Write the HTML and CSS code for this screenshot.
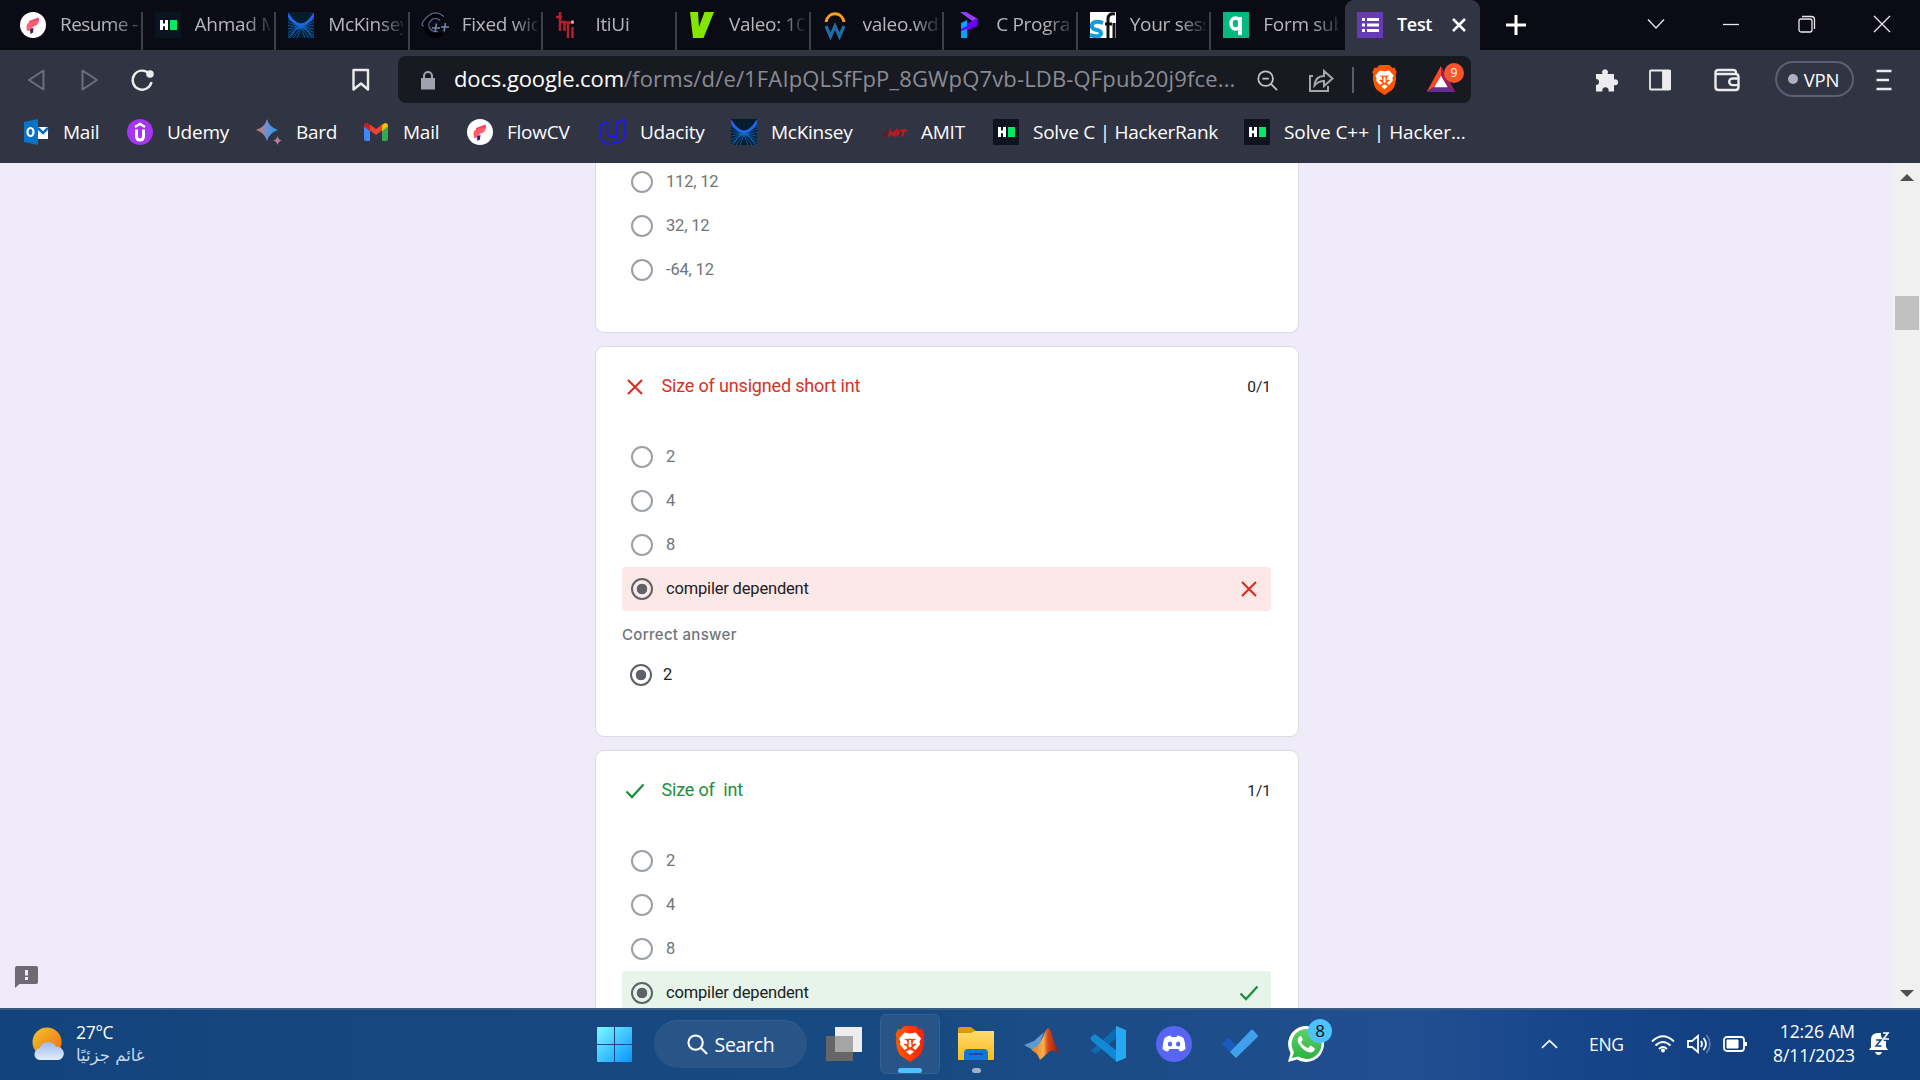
FILE: index.html
```
<!DOCTYPE html>
<html lang="en">
<head>
<meta charset="utf-8">
<title>Test</title>
<link rel="stylesheet" href="styles.css">
</head>
<body>
<svg class="defs" width="0" height="0">
  <defs>
    <linearGradient id="gWin" x1="0" y1="0" x2="1" y2="1"><stop offset="0" stop-color="#7df8ff"/><stop offset="1" stop-color="#0695ff"/></linearGradient>
    <linearGradient id="gFolder" x1="0" y1="0" x2="0" y2="1"><stop offset="0" stop-color="#ffdc6e"/><stop offset="1" stop-color="#fbb91d"/></linearGradient>
    <linearGradient id="gSun" x1="0" y1="0" x2="1" y2="1"><stop offset="0" stop-color="#f3c62b"/><stop offset="1" stop-color="#ee6a12"/></linearGradient>
    <linearGradient id="gCloud" x1="0" y1="0" x2="0" y2="1"><stop offset="0" stop-color="#9dbcf3"/><stop offset="1" stop-color="#e3ecfb"/></linearGradient>
    <linearGradient id="gBrave" x1="0" y1="0" x2="1" y2="0"><stop offset="0" stop-color="#ff5a00"/><stop offset="1" stop-color="#ff1f0a"/></linearGradient>
    <linearGradient id="gBard" x1="0" y1="0" x2="1" y2="0"><stop offset="0" stop-color="#e2705f"/><stop offset=".5" stop-color="#6c8fd8"/><stop offset="1" stop-color="#1b9be0"/></linearGradient>
    <linearGradient id="gMat" x1="0" y1="0" x2="1" y2="0"><stop offset="0" stop-color="#e87b1e"/><stop offset=".45" stop-color="#f7b04a"/><stop offset=".6" stop-color="#d9481c"/><stop offset="1" stop-color="#8e1a10"/></linearGradient>
    <linearGradient id="gWa" x1="0" y1="0" x2="0" y2="1"><stop offset="0" stop-color="#5fd06b"/><stop offset="1" stop-color="#2ab43f"/></linearGradient>
  </defs>
  <symbol id="flow" viewBox="0 0 26 26"><circle cx="13" cy="13" r="13" fill="#fff"/><path d="M9 9 18.500 5.500Q20 9 17 11L9 13.500z" fill="#ff3e6e"/><path d="M6.500 14Q7 11 9 10.500L18.500 8Q19 12 16 13.500L12.500 15v3L7 19z" fill="#ff5e6c"/><path d="M10 17.500 13.500 16 13 20.500 10.500 22z" fill="#3d1a78"/></symbol>
  <symbol id="hr" viewBox="0 0 26 26"><path d="M5 8h3v3.500h2V8h3v10h-3v-3.700H8V18H5z" fill="#fff"/><path d="M15 8h7v10h-7z" fill="#00ea64"/></symbol>
  <symbol id="mck" viewBox="0 0 26 26"><path fill="#051c2c" d="M0 0h26v26H0z"/><g fill="none"><path d="M0 1.500Q13 23 26 1.500M0 4Q13 23 26 4" stroke="#2563f5" stroke-width="1.500"/><path d="M0 7 17 17 26 26M26 7 9 17 0 26M0 10 18 17.500 24 26M26 10 8 17.500 2 26M0 13.500 12 15M26 13.500 14 15M0 17l11-2M26 17l-11-2M0 20.500 13 14 26 20.500M0 23.500 13 14 26 23.500M5 26 13 15 21 26M9 26l4-10 4 10" stroke="#116fd0" stroke-width=".7"/></g></symbol>
  <symbol id="lion" viewBox="0 0 30 36"><path d="M9 0h12l3.500 3.500L27 3l2.500 5.500L28.500 12 29 16c-1 7-2 11-5 14l-9 6-9-6C3 27 2 23 1 16l.5-4L.5 8.500 3 3l2.500.5z"/><path fill="#fff" d="M9.500 6.500 15 7.500l5.500-1L26 12.500l-1.500 3 .5 3-4.500 5.500-3-2L19 20l2.500-1.500-1.500-1-2.500.7.700-3.700 3.300-1.800-4.500.3L15 12.500l-2 .5-4.500-.3 3.300 1.800.7 3.700-2.500-.7-1.500 1L11 20l1.500 2-3 2L5 18.500l.5-3L4 12.500zM14 14h2l.5 6.500L15 21.500l-1.500-1zM15 23.500l4 2-4 3.500-4-3.500z"/></symbol>
  <symbol id="cross" viewBox="0 0 18 18"><path d="M2 2 16 16M16 2 2 16" fill="none" stroke="currentColor" stroke-width="2.200"/></symbol>
  <symbol id="tick" viewBox="0 0 20 18"><path d="M1.500 9.500 7 15 18.500 2.500" fill="none" stroke="currentColor" stroke-width="2.300"/></symbol>
</svg>

<header class="browser">
  <div class="tabs">
    <div class="tab lead"><svg class="fav"><use href="#flow"/></svg><span class="label">Resume -</span></div>
    <div class="tab"><svg class="fav hr-dim"><use href="#hr"/></svg><span class="label">Ahmad M</span></div>
    <div class="tab"><svg class="fav"><use href="#mck"/></svg><span class="label">McKinsey</span></div>
    <div class="tab"><svg class="fav" viewBox="0 0 26 26" fill="none"><path d="M21 5.500A10.500 10.500 0 1 0 20 21.500" stroke="#020206" stroke-width="4.500"/><path d="M22 4.500Q13-3 5 5T2 14" stroke="#57688f" stroke-width="1.200"/><path d="M18 8.500A6.500 6.500 0 1 0 16 19" stroke="#57688f" stroke-width="1.200"/><path d="M10 16h8M14.500 11.500 13 20M19 15h8M23.500 11 22 19.500" stroke="#7587b3" stroke-width="1.500"/></svg><span class="label">Fixed wid</span></div>
    <div class="tab"><svg class="fav" viewBox="0 0 26 26" fill="none" stroke="#b51f28" stroke-width="2.500"><path d="M5 0v19M1 5h6M5 10h4.500v9M9.500 10.500h9.500M13 11v15M17.500 15v11"/><path d="M17.500 8.500v3" stroke="#d7b7b9"/></svg><span class="label">ItiUi</span></div>
    <div class="tab"><svg class="fav" viewBox="0 0 26 26"><path d="M1 0h8l1 15L15.500 0H25L14.500 26H4z" fill="#82e600"/></svg><span class="label">Valeo: 10</span></div>
    <div class="tab"><svg class="fav" viewBox="0 0 26 26" fill="none"><path d="M3 10C5-1 19-1 21 10" stroke="#f5a11d" stroke-width="3"/><path d="M3 14 7.500 24.500 12 14 16.500 24.500 21 14" stroke="#1f6da8" stroke-width="3.200"/></svg><span class="label">valeo.wd</span></div>
    <div class="tab"><svg class="fav" viewBox="0 0 26 26"><path d="M4 0h6l12 7-3 4z" fill="#9a3dff"/><path d="M21.500 6v8L5 21v-6z" fill="#6a00f4"/><path d="M5 11l6-3v6l-6 3zM5 19l6-2v9H5z" fill="#00a3ff"/></svg><span class="label">C Progra</span></div>
    <div class="tab"><svg class="fav" viewBox="0 0 26 26"><path d="M0 0h26v26H0z" fill="#fff"/><path d="M13 11C5 8 1 11 2 15s9 2 9 6-5 4-11 2" fill="none" stroke="#159bd7" stroke-width="4"/><path d="M18 26V7q0-6 7-5M15 12h7M24 11v15" fill="none" stroke="#111" stroke-width="3"/></svg><span class="label">Your sess</span></div>
    <div class="tab no-sep"><svg class="fav" viewBox="0 0 26 26"><path d="M0 0h26v26H0z" fill="#04b980"/><ellipse cx="12.500" cy="11.500" rx="4.500" ry="5.500" fill="none" stroke="#fff" stroke-width="3.500"/><path d="M17 5v18" stroke="#fff" stroke-width="3.700"/></svg><span class="label">Form sub</span></div>
    <div class="tab active"><svg class="fav" viewBox="0 0 26 26"><path d="M0 0h26v26H0z" fill="#673ab7"/><path d="M5 6h3v3H5zM5 11.500h3v3H5zM5 17h3v3H5zM10 6h12v3H10zM10 11.500h12v3H10zM10 17h12v3H10z" fill="#fff"/></svg><span class="label">Test</span><svg class="tab-close" viewBox="0 0 14 14"><path d="M1 1 13 13M13 1 1 13"/></svg></div>
    <svg class="new-tab" viewBox="0 0 20 20"><path d="M10 0v20M0 10h20"/></svg>
    <div class="winctl">
      <svg width="18" height="18" viewBox="0 0 18 18"><path d="M1 4.500 9 13 17 4.500"/></svg>
      <svg width="18" height="18" viewBox="0 0 18 18"><path d="M1 9.500h16"/></svg>
      <svg width="18" height="18" viewBox="0 0 18 18"><rect x="1" y="4" width="13" height="13" rx="2"/><path d="M4 1.500h9.500a3 3 0 0 1 3 3V14"/></svg>
      <svg width="18" height="18" viewBox="0 0 18 18"><path d="M1 1 17 17M17 1 1 17"/></svg>
    </div>
  </div>

  <div class="toolbar">
    <svg class="ic dim" viewBox="0 0 24 24"><path d="M18.500 2.500v19L4 12z"/></svg>
    <svg class="ic dim forward" viewBox="0 0 24 24"><path d="M5.500 2.500v19L20 12z"/></svg>
    <svg class="ic reload" viewBox="0 0 24 24"><path d="M19 5.500A9.500 9.500 0 1 0 21.500 14"/><circle cx="20" cy="6" r="2.600" fill="#ececee"/></svg>
    <svg class="ic bookmark" viewBox="0 0 24 24"><path d="M4.500 2h14.500v19.500L12 15.500 4.500 21.500z"/></svg>
    <div class="address">
      <svg class="lock" viewBox="0 0 20 20"><path d="M3 8h14v11.500H3z" fill="#a0a3ad"/><path d="M6 8.500V6a4 4 0 0 1 8 0v2.500" fill="none" stroke="#a0a3ad" stroke-width="2"/></svg>
      <div class="url"><b>docs.google.com</b>/forms/d/e/1FAIpQLSfFpP_8GWpQ7vb-LDB-QFpub20j9fce...</div>
      <svg class="zoom" viewBox="0 0 24 24"><circle cx="10.500" cy="10.500" r="8"/><path d="M16.500 16.500 23 23M7 10.500h7"/></svg>
      <svg class="share" viewBox="0 0 26 26"><path d="M5 9H2v15h18v-5M6.500 18.500c.5-6 4-9.500 9.500-9.500V4l8.500 7.500L16 19v-5c-4.500 0-7 1.500-9.500 4.500z"/></svg>
      <i class="bar"></i>
      <svg class="shield" fill="#ff5500"><use href="#lion"/></svg>
      <div class="bat"><svg viewBox="0 0 30 27"><path d="M15 0 0 27 15 17z" fill="#ff4724"/><path d="M15 0 30 27 15 17z" fill="#9e1f63"/><path d="M0 27h30L15 17z" fill="#662d91"/><path d="M15 10 8 22h14z" fill="#fff"/></svg><span class="badge">9</span></div>
    </div>
    <svg class="puzzle" viewBox="0 0 24 24"><path d="M1 6h6.500a3 3 0 1 1 5 0H19v5.500a3 3 0 1 1 0 5.500v6.500h-5.500a3.200 3.200 0 1 0-6 0H1V17a3 3 0 1 0 0-6z"/></svg>
    <svg class="ic sidebar" viewBox="0 0 24 24"><rect x="2" y="2.500" width="20" height="19" rx="1"/><path d="M15 3h7v18h-7z" fill="#ececee"/></svg>
    <svg class="ic wallet" viewBox="0 0 26 24"><path d="M22 6V5q0-3-3-3H4.500q-3 0-3 3v14q0 3 3 3h17q3 0 3-3V9q0-3-3-3H2M25 10.500h-6.500a3.300 3.300 0 0 0 0 6.600H25"/></svg>
    <div class="vpn"><i></i>VPN</div>
    <svg class="ic menu" viewBox="0 0 24 24"><path d="M4.500 3h15M4.500 12h12.500M4.500 21h15"/></svg>
  </div>

  <nav class="bookmarks">
    <a><svg class="fav" viewBox="0 0 26 26"><path d="M14 8h11v12H14z" fill="#fff"/><path d="M15 9l5 5 5-5" stroke="#0a6ebd" stroke-width="2.500" fill="none"/><path d="M1 3l14-3v26L1 23z" fill="#0a72c7"/><ellipse cx="7.500" cy="13" rx="3" ry="4" fill="none" stroke="#fff" stroke-width="2.200"/></svg>Mail</a>
    <a><svg class="fav" viewBox="0 0 26 26"><circle cx="13" cy="13" r="13" fill="#a435f0"/><path d="M8 8l5-3 5 3" stroke="#fff" stroke-width="2.500" fill="none"/><path d="M9.500 10.500V17q0 4 3.500 4t3.500-4v-6.500" stroke="#fff" stroke-width="3" fill="none"/></svg>Udemy</a>
    <a><svg class="fav" viewBox="0 0 26 26"><path d="M11 0Q13 8 22 11 13 14 11 22 9 14 0 11 9 8 11 0z" fill="url(#gBard)"/><path d="M21.500 17q1 4 4.500 4.500-3.500.5-4.500 4.500-1-4-4.500-4.500 3.500-.5 4.500-4.500z" fill="#b57aa8"/></svg>Bard</a>
    <a><svg class="fav" viewBox="0 0 26 26"><path d="M1 7v13q0 2 2 2h4V10z" fill="#4285f4"/><path d="M19 10v12h4q2 0 2-2V7z" fill="#34a853"/><path d="M19 6v6l6-4.500V6q-2-4-6 0z" fill="#fbbc04"/><path d="M7 6v6L1 7.500V6q2-4 6 0z" fill="#c5221f"/><path d="M7 5.500 13 10l6-4.500v6L13 16l-6-4.500z" fill="#ea4335"/></svg>Mail</a>
    <a><svg class="fav"><use href="#flow"/></svg>FlowCV</a>
    <a><svg class="fav" viewBox="0 0 26 26"><path d="M7.500 2.500 1 5.500V17q0 8 7.500 8t8-7V3.500L25 1v14q-1 8-9.500 9.500M7.500 2.500V14q1 5 8 3" fill="none" stroke="#2015ff" stroke-width="1.700"/></svg>Udacity</a>
    <a><svg class="fav"><use href="#mck"/></svg>McKinsey</a>
    <a><svg class="fav amit" viewBox="0 0 26 26"><path d="M1 18l5-6v6M3 16h4" stroke="#582023"/><path d="M8 17.500 9.500 12l2 4 3.500-4-1 5.500M17.500 11l-1 6.500M19 11.500h7M22.500 12l-1 5.500" stroke="#c7161d"/></svg>AMIT</a>
    <a><svg class="fav hr-box"><use href="#hr"/></svg>Solve C | HackerRank</a>
    <a><svg class="fav hr-box"><use href="#hr"/></svg><span class="wide">Solve C++ | Hacker...</span></a>
  </nav>
</header>

<main class="viewport">
  <div class="feed">
    <section class="card first">
      <div class="opt"><i class="radio"></i><span>112, 12</span></div>
      <div class="opt"><i class="radio"></i><span>32, 12</span></div>
      <div class="opt"><i class="radio"></i><span>-64, 12</span></div>
    </section>
    <section class="card">
      <div class="title bad"><svg class="mark"><use href="#cross"/></svg><h2>Size of unsigned short int</h2><span class="score">0/1</span></div>
      <div class="opt"><i class="radio"></i><span>2</span></div>
      <div class="opt"><i class="radio"></i><span>4</span></div>
      <div class="opt"><i class="radio"></i><span>8</span></div>
      <div class="opt picked wrong"><i class="radio on"></i><span>compiler dependent</span><svg class="mark"><use href="#cross"/></svg></div>
      <div class="correct">Correct answer</div>
      <div class="opt picked answer"><i class="radio on"></i><span>2</span></div>
    </section>
    <section class="card">
      <div class="title good"><svg class="mark"><use href="#tick"/></svg><h2>Size of&nbsp; int</h2><span class="score">1/1</span></div>
      <div class="opt"><i class="radio"></i><span>2</span></div>
      <div class="opt"><i class="radio"></i><span>4</span></div>
      <div class="opt"><i class="radio"></i><span>8</span></div>
      <div class="opt picked right"><i class="radio on"></i><span>compiler dependent</span><svg class="mark"><use href="#tick"/></svg></div>
    </section>
  </div>
  <div class="scrollbar"><i class="up"></i><i class="thumb"></i><i class="down"></i></div>
  <svg class="report" viewBox="0 0 23 22"><path d="M2 0h19q2 0 2 2v14q0 2-2 2H4.500L0 22V2q0-2 2-2z" fill="#6e6973"/><path d="M10 4h3v5.500h-3zM10 11h3v3h-3z" fill="#efebf8"/></svg>
</main>

<footer class="taskbar">
  <svg class="weather" viewBox="0 0 34 34"><circle cx="15.500" cy="15" r="15" fill="url(#gSun)"/><path d="M9 33.500a6 6 0 0 1-1-12 9 8 0 0 1 17-1.500 6.500 6.500 0 0 1 2 13.500z" fill="url(#gCloud)"/></svg>
  <div class="temp"><span>27°C</span><span class="sky" lang="ar" dir="rtl">غائم جزئيًا</span></div>
  <svg class="start" viewBox="0 0 35 35"><path d="M0 1q0-1 1-1h16v17H0zM18 0h16q1 0 1 1v16H18zM0 18h17v17H1q-1 0-1-1zM18 18h17v16q0 1-1 1H18z" fill="url(#gWin)"/></svg>
  <div class="search"><svg viewBox="0 0 22 22"><circle cx="9" cy="9" r="7.500"/><path d="M14.500 14.500 21 21"/></svg>Search</div>
  <svg class="app taskview" viewBox="0 0 36 34"><path d="M9 0h27v25H9z" fill="#eee"/><path d="M0 9h27v25H0z" fill="#666"/><path d="M9 9h18v16H9z" fill="#a5a5a5"/></svg>
  <div class="app-tile"><svg class="brave" fill="url(#gBrave)"><use href="#lion"/></svg><i class="run"></i></div>
  <div class="app-tile plain explorer"><svg viewBox="0 0 36 34"><path d="M0 2q0-2 2-2h11l5 4v5H0z" fill="#dc9a08"/><path d="M0 6h13l4-2h19v28q0 1-1 1H0z" fill="url(#gFolder)"/><path d="M6 33V26q0-4 4-4h16q4 0 4 4v7z" fill="#1277d1"/><path d="M11 27h14" stroke="#0c4fa0" stroke-width="2"/></svg><i class="run idle"></i></div>
  <svg class="app" viewBox="0 0 36 36"><path d="M0 19 10 15 20 6 15 20 9 24z" fill="#5b9bd0"/><path d="M7 24 14 20 19 11Q22 3 24 2 27 3 29 13L35 28Q30 23 26 25L16 34Q13 26 7 24z" fill="url(#gMat)"/></svg>
  <svg class="app" viewBox="0 0 36 36"><path d="M1 24 5 28 28 11V0L4 22z" fill="#0d6cb1"/><path d="M1 11 5 8 27 25v11L1 14q-1-1 0-3z" fill="#1189d5"/><path d="M26 0 36 4v28l-10 4z" fill="#28a8f3"/></svg>
  <svg class="app" viewBox="0 0 36 36"><circle cx="18" cy="18" r="18" fill="#5865f2"/><path d="M8.500 12q3-2.500 6-2.500l1 1.500h5l1-1.500q3 0 6 2.500 2 5 2 11-3 2.500-5.500 2.500L22.500 23h-9L12 25.500Q9.500 25.500 6.500 23q0-6 2-11z" fill="#fff"/><ellipse cx="14" cy="18" rx="2.200" ry="2.600" fill="#5865f2"/><ellipse cx="22.200" cy="18" rx="2.200" ry="2.600" fill="#5865f2"/></svg>
  <svg class="app" viewBox="0 0 36 36"><path d="M0 18 6 11.500 16 21 14 32z" fill="#1a59bd"/><path d="M8 26 29 4q1-1 2 0l4.500 5q.7 1 0 2L14 32z" fill="#40a0ee"/></svg>
  <div class="app whatsapp"><svg viewBox="0 0 36 36"><path d="M0 36 2.500 27A18 18 0 1 1 9 33.500z" fill="#fff"/><path d="M4 32 6 26A15 15 0 1 1 10.500 30.500z" fill="url(#gWa)"/><path d="M12 10q-4 3-1 8 4 7 11 8.500 4 0 5-4l-4.500-3-2.500 2.500q-5-2-7-6l2-2-2-4z" fill="#fff"/></svg><span class="count">8</span></div>
  <svg class="tray caret" viewBox="0 0 18 10"><path d="M1 9 9 1.500 17 9"/></svg>
  <span class="lang">ENG</span>
  <svg class="tray wifi" viewBox="0 0 24 18"><path d="M1 6.500Q12-4 23 6.500M4.500 10.500q7.500-7 15 0M8 14q4-4 8 0"/><circle cx="12" cy="15.500" r="2" fill="#fff" stroke="none"/></svg>
  <svg class="tray sound" viewBox="0 0 24 20"><path d="M1 7h4l6-5v16l-6-5H1zM14 7q2 3 0 6M16.500 4q5 6 0 12"/><path d="M19.500 1q7 9 0 18" opacity=".3"/></svg>
  <svg class="tray battery" viewBox="0 0 24 16"><rect x="1" y="1" width="20" height="14" rx="3"/><path d="M4 4h11v8H4z" fill="#fff" stroke-width="1"/><path d="M22.500 6v4" stroke-width="3"/></svg>
  <div class="clock"><span>12:26 AM</span><span>8/11/2023</span></div>
  <svg class="bell" viewBox="0 0 22 24"><path d="M1 18 3 15V8q0-7 7-7h3v3l3 5h2v6l2 3zM7 20h7q-1 3-3.500 3T7 20z" fill="#fff"/><path d="M8 8h5l-5 6h5.500" fill="none" stroke="#14437f" stroke-width="1.500"/><path d="M15 1h5l-4.500 6H21" fill="none" stroke="#fff" stroke-width="1.600"/></svg>
</footer>
</body>
</html>
```
FILE: styles.css
```
* { box-sizing: border-box; }
body {
  margin: 0;
  width: 1920px;
  height: 1080px;
  overflow: hidden;
  display: flex;
  flex-direction: column;
  font-family: "Open Sans", "Noto Sans", sans-serif;
}
svg { flex: none; display: block; overflow: visible; }
.defs { position: absolute; }
.fav { width: 26px; height: 26px; }

/* browser frame */
.browser { flex: none; height: 163px; background: #313442; color: #fff; }
.tabs { height: 50px; display: flex; align-items: stretch; background: #0b0b15; padding-left: 9px; }
.tab {
  flex: none;
  width: 133.600px;
  display: flex;
  align-items: center;
  gap: 14px;
  padding-left: 12px;
  font-size: 19px;
  color: #b6b6bb;
  background: linear-gradient(#3f4043, #3f4043) right 12px / 2px 38px no-repeat;
}
.tab.lead { padding-left: 11px; }
.tab .label {
  width: 75px;
  overflow: hidden;
  white-space: nowrap;
  line-height: 28px;
  margin-top: -2px;
  letter-spacing: -.3px;
  -webkit-mask-image: linear-gradient(90deg, #000 50px, transparent 80px);
  mask-image: linear-gradient(90deg, #000 50px, transparent 80px);
}
.tab.lead .label { width: 80px; letter-spacing: -.6px; -webkit-mask-image: linear-gradient(90deg, #000 50px, transparent 92px); mask-image: linear-gradient(90deg, #000 50px, transparent 92px); }
.tab.no-sep { background: none; }
.hr-dim { background: #081420; }
.hr-box { background: #0d141e; }
.tab.active { background: #313442; color: #fff; border-radius: 9px 9px 0 0; width: 135px; }
.tab.active .label { width: 41px; font-weight: 600; -webkit-mask-image: none; mask-image: none; font-size: 18px; }
.tab-close { width: 14px; height: 14px; fill: none; stroke: #fff; stroke-width: 2.500; }
.new-tab { width: 20px; height: 20px; stroke: #fff; stroke-width: 3; margin: 15px 0 0 26px; }
.winctl { margin-left: 121px; display: flex; gap: 57.300px; align-items: center; fill: none; stroke: #e8e8ea; stroke-width: 1.300; margin-top: -2px; }

.toolbar { height: 59px; display: flex; align-items: center; padding-left: 25px; }
.ic { width: 24px; height: 24px; fill: none; stroke: #ececee; stroke-width: 2.400; }
.dim { stroke: #6d707c; stroke-width: 2; stroke-linejoin: round; }
.forward { margin-left: 28px; }
.reload { margin-left: 29px; }
.bookmark { margin-left: 195px; stroke-linejoin: round; }
.address {
  margin-left: 25px;
  width: 1073px;
  height: 47px;
  border-radius: 8px;
  background: #181a22;
  display: flex;
  align-items: center;
  padding-left: 20px;
}
.lock { width: 20px; height: 20px; }
.url { margin-left: 16px; width: 790px; white-space: nowrap; font-size: 22px; letter-spacing: .15px; line-height: 30px; color: #8b8c93; margin-top: -3px; }
.url b { font-weight: 400; color: #fff; letter-spacing: -.12px; }
.zoom { width: 22px; height: 22px; margin-left: 12px; fill: none; stroke: #c4c5c9; stroke-width: 1.900; }
.share { width: 26px; height: 26px; margin-left: 30px; fill: none; stroke: #a5a6ab; stroke-width: 2; }
.bar { width: 2px; height: 26px; margin-left: 18px; background: #5c5e67; }
.shield { width: 27px; height: 30px; margin-left: 17px; }
.bat { position: relative; margin-left: 28px; margin-top: -2px; }
.bat svg { width: 30px; height: 26px; }
.badge {
  position: absolute;
  left: 18px;
  top: -3px;
  width: 20px;
  height: 20px;
  border-radius: 10px;
  background: #fb542b;
  font-size: 12px;
  line-height: 20px;
  text-align: center;
}
.puzzle { width: 24px; height: 24px; margin-left: 124px; fill: #ececee; }
.sidebar { margin-left: 29px; stroke-width: 1.800; }
.wallet { width: 26px; margin-left: 42px; }
.vpn {
  margin-left: 35px;
  width: 79px;
  height: 36px;
  margin-top: -1px;
  border: 2px solid #5b5e75;
  border-radius: 18px;
  display: flex;
  align-items: center;
  justify-content: center;
  gap: 6px;
  font-size: 18.500px;
  letter-spacing: -.2px;
  padding-right: 2px;
}
.vpn i { width: 10px; height: 10px; border-radius: 5px; background: #aeb1c2; }
.menu { margin-left: 18px; }

.bookmarks {
  height: 46px;
  padding-left: 23px;
  display: grid;
  grid-template-columns: 104px 129px 107px 104px 133px 131px 150px 112px 251px 260px;
  align-items: center;
  font-size: 19px;
  letter-spacing: -.25px;
}
.bookmarks a { display: flex; align-items: center; gap: 14px; white-space: nowrap; line-height: 26px; }
.bookmarks .wide { letter-spacing: -.05px; }
.amit { fill: none; stroke-width: 2; }

/* form page */
.viewport {
  position: relative;
  flex: none;
  height: 845px;
  overflow: hidden;
  background: #efebf8;
  display: flex;
  justify-content: space-between;
  font-family: Roboto, sans-serif;
}
.feed { margin: -3px 0 0 595px; width: 704px; display: flex; flex-direction: column; gap: 13px; flex: none; }
.card {
  flex: none;
  background: #fff;
  border: 1px solid #dadce0;
  border-radius: 9px;
  padding: 23px 27px 39px 26px;
}
.card.first { padding-top: 0; border-top: 0; border-radius: 0 0 9px 9px; padding-bottom: 40px; }
.title { display: flex; align-items: center; height: 34px; margin-bottom: 31px; padding-left: 3px; }
.title h2 { margin: 0; width: 586px; font-weight: 400; font-size: 18px; line-height: 26px; padding-left: 16.500px; letter-spacing: -.17px; margin-top: -2px; }
.bad { color: #d93025; }
.good { color: #1e8e3e; }
.mark { width: 20px; height: 18px; }
.score { margin-left: auto; color: #202124; font-size: 15.500px; }
.opt {
  height: 44px;
  display: flex;
  align-items: center;
  padding-left: 9px;
  gap: 13px;
  font-size: 16.500px;
  letter-spacing: -.18px;
  color: #70757a;
  border-radius: 4px;
}
.opt span { margin-top: -2px; }
.radio { flex: none; width: 22px; height: 22px; border: 2px solid #9aa0a6; border-radius: 50%; }
.radio.on { border-color: #5f6368; background: radial-gradient(circle, #5f6368 5px, transparent 5.600px); }
.picked { color: #202124; }
.opt .mark { margin-left: auto; margin-right: 12px; }
.wrong { background: #fce8e6; }
.wrong .mark { color: #d93025; }
.right { background: #e6f4ea; }
.right .mark { color: #1e8e3e; }
.correct { font-family: Inter, sans-serif; font-weight: 500; font-size: 15px; letter-spacing: .3px; line-height: 20px; color: #70757a; margin-top: 14px; }
.answer { padding-left: 8px; gap: 11px; margin-top: 8px; }

.scrollbar { width: 27px; background: #f0f0f0; display: flex; flex-direction: column; align-items: center; }
.up { border: 7px solid transparent; border-top: 0; border-bottom: 7px solid #505050; margin-top: 11px; }
.thumb { width: 24px; height: 34px; background: #c1c1c1; margin-top: 115px; }
.down { border: 7px solid transparent; border-bottom: 0; border-top: 7px solid #505050; margin-top: auto; margin-bottom: 11px; }
.report { position: absolute; left: 15px; top: 803px; width: 23px; height: 22px; }

/* taskbar */
.taskbar {
  flex: none;
  height: 72px;
  padding-left: 32px;
  padding-bottom: 2px;
  border-top: 2px solid #3a5b80;
  background: linear-gradient(90deg, #12437c, #16477f 20%, #174a80 45%, #1e4d8b 65%, #224e91 74%, #16458a 82%, #113f80 92%, #12417f);
  color: #fff;
  display: flex;
  align-items: center;
}
.weather { width: 33px; height: 34px; }
.temp { margin-left: 11px; width: 90px; display: flex; flex-direction: column; font-size: 17.500px; line-height: 24px; letter-spacing: -.3px; margin-top: -1px; }
.sky { font-family: "DejaVu Sans", sans-serif; font-size: 16.500px; letter-spacing: 0; align-self: flex-start; color: #c9d8ea; }
.start { width: 35px; height: 35px; margin-left: 431px; }
.search {
  margin-left: 22px;
  width: 153px;
  height: 48px;
  border-radius: 24px;
  background: #285488;
  border-top: 1px solid #355f91;
  display: flex;
  align-items: center;
  justify-content: center;
  gap: 7px;
  font-size: 19.500px;
  letter-spacing: -.3px;
}
.search svg { width: 21px; height: 21px; fill: none; stroke: #fff; stroke-width: 2.200; }
.app { width: 36px; height: 36px; margin-left: 30px; }
.taskview { margin-left: 19px; height: 34px; }
.app-tile {
  position: relative;
  margin-left: 18px;
  width: 60px;
  height: 60px;
  border-radius: 6px;
  background: #285488;
  border: 1px solid #355f91;
  display: flex;
  align-items: center;
  justify-content: center;
}
.brave { width: 30px; height: 36px; }
.run { position: absolute; bottom: 0; width: 24px; height: 5px; border-radius: 3px; background: #4cc2ff; }
.plain { background: none; border-color: transparent; width: 36px; }
.plain svg { width: 36px; height: 34px; }
.idle { width: 9px; background: #9fb1c8; }
.whatsapp { position: relative; }
.count {
  position: absolute;
  left: 20px;
  top: -7px;
  width: 24px;
  height: 24px;
  border-radius: 12px;
  background: #4cc2ff;
  color: #111;
  font-size: 17px;
  line-height: 24px;
  text-align: center;
}
.tray { fill: none; stroke: #fff; stroke-width: 1.800; }
.caret { width: 17px; height: 10px; margin-left: 217px; }
.lang { width: 48px; margin-left: 31px; font-size: 17.500px; letter-spacing: -.3px; }
.wifi { width: 24px; height: 18px; margin-left: 14px; }
.sound { width: 24px; height: 20px; margin-left: 12px; }
.battery { width: 24px; height: 16px; margin-left: 12px; }
.clock { width: 97px; margin-left: 11px; display: flex; flex-direction: column; text-align: right; font-size: 17.500px; line-height: 24px; letter-spacing: -.1px; white-space: nowrap; margin-top: -2px; }
.bell { width: 22px; height: 24px; margin-left: 13px; }
```
